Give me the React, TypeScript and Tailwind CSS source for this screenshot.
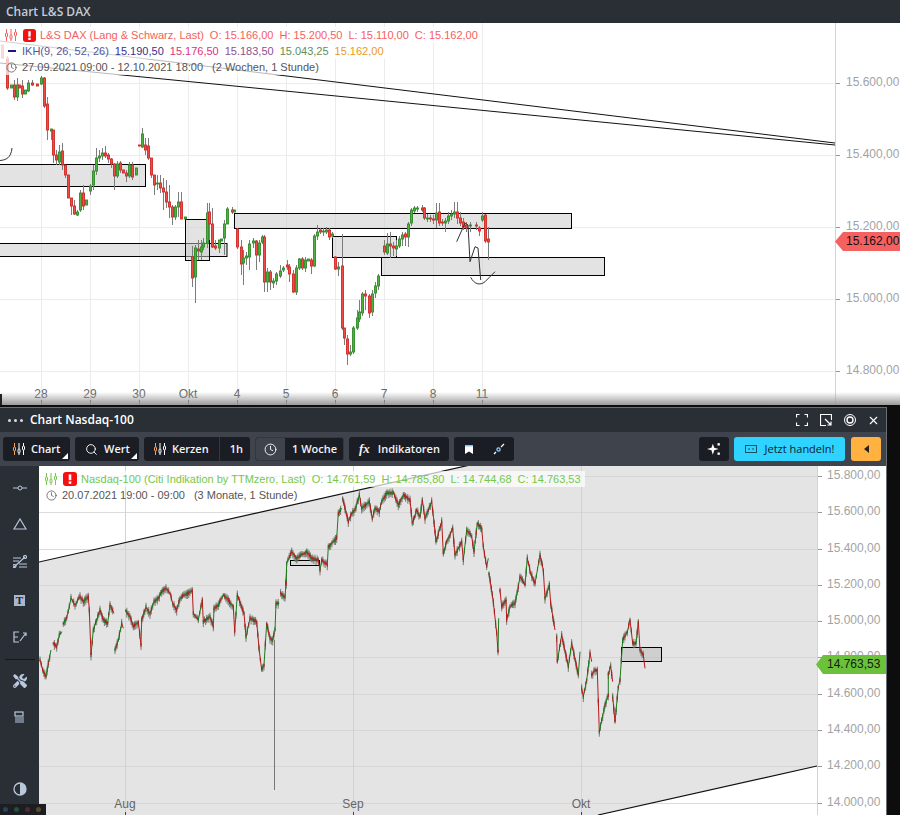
import React from "react";
import { Search, Clock, X } from "lucide-react";
import { FaTools } from "react-icons/fa";

// x, body top, body bottom, up?, wick top, wick bottom (all in page pixels)
type Candle = [number, number, number, number, number?, number?];

const daxCandles: Candle[] = [
  [2, 45, 58, 0], [7, 58, 88, 0, 56, 90], [11, 85, 88, 1], [14, 85, 97, 0, 80, 100], [17, 85, 97, 1, 78, 101], [19, 85, 88, 0],
  [22, 86, 94, 0, 80, 98], [25, 90, 94, 1], [28, 83, 91, 1, 80, 92], [32, 83, 85, 0, 80, 86], [37, 84, 86, 0], [41, 78, 84, 1, 76, 85],
  [44, 78, 106, 0, 77, 108], [47, 104, 130, 0, 97, 140], [51, 129, 131, 1, 129, 140], [53, 130, 155, 0, 130, 163], [56, 155, 160, 0, 150, 165],
  [59, 152, 162, 1, 145, 165], [62, 151, 165, 0, 143, 170], [65, 165, 175, 0, 165, 178], [68, 175, 198, 0], [71, 198, 206, 0, 198, 215],
  [74, 206, 214, 0, 200, 215], [77, 212, 215, 1, 210, 216], [80, 193, 210, 1, 190, 212], [83, 193, 206, 0, 185, 210], [86, 200, 205, 1],
  [90, 186, 191, 1, 184, 195], [93, 171, 185, 1, 165, 190], [96, 158, 171, 1, 148, 175], [99, 156, 158, 1, 150, 162], [102, 153, 156, 1, 148, 160],
  [105, 153, 156, 0, 146, 158], [108, 155, 159, 0, 153, 163], [111, 159, 164, 0, 158, 168], [114, 164, 176, 0, 163, 190], [117, 164, 176, 1, 161, 178],
  [120, 163, 170, 0, 161, 173], [123, 170, 173, 0], [126, 173, 176, 0, 170, 182], [129, 165, 176, 1, 162, 178], [132, 165, 177, 0, 162, 180],
  [136, 168, 175, 1], [139, 145, 146, 0], [142, 134, 147, 1, 128, 148], [145, 145, 150, 0, 138, 155], [148, 146, 158, 0, 138, 160],
  [151, 158, 175, 0, 158, 178], [154, 175, 185, 0, 175, 195], [157, 183, 184, 1, 175, 190], [160, 183, 188, 0, 175, 193], [163, 188, 192, 0, 178, 210],
  [166, 192, 202, 0, 180, 208], [169, 202, 207, 0, 185, 218], [172, 207, 217, 0, 205, 225], [175, 207, 217, 1, 205, 220], [178, 202, 207, 1, 192, 217],
  [181, 202, 219, 0, 192, 219], [185, 217, 219, 1], [192, 257, 278, 0, 246, 287], [195, 248, 277, 1, 245, 303], [198, 249, 251, 0, 240, 260],
  [201, 247, 252, 1, 240, 260], [203, 243, 247, 1, 238, 250], [207, 213, 243, 1, 203, 248], [209, 212, 224, 0, 203, 240], [212, 224, 247, 0, 208, 248],
  [215, 246, 248, 0, 240, 250], [219, 240, 248, 1, 240, 253], [221, 239, 241, 1], [224, 224, 238, 1, 220, 255], [227, 209, 224, 1, 207, 224],
  [232, 210, 212, 0, 207, 214], [234, 210, 212, 1], [237, 229, 247, 0, 228, 249], [241, 247, 264, 0, 240, 275], [243, 258, 263, 1, 250, 285],
  [246, 256, 258, 1, 252, 265], [249, 244, 257, 1, 240, 270], [253, 241, 243, 1, 238, 248], [256, 241, 255, 0, 240, 270], [259, 243, 255, 1, 240, 262],
  [262, 237, 242, 1, 235, 244], [264, 237, 282, 0, 235, 292], [267, 272, 282, 1, 268, 292], [270, 272, 282, 0, 270, 290], [273, 281, 283, 1, 278, 288],
  [276, 274, 281, 1, 272, 285], [280, 271, 276, 1, 265, 278], [283, 268, 270, 1, 266, 272], [287, 265, 267, 0, 260, 270], [289, 267, 274, 0, 264, 282],
  [293, 274, 292, 0, 270, 293], [296, 268, 292, 1, 265, 295], [299, 259, 268, 1, 258, 270], [302, 259, 268, 0, 257, 270], [305, 260, 268, 1, 257, 272],
  [308, 259, 261, 1], [311, 260, 266, 0, 258, 274], [314, 236, 266, 1, 234, 267], [317, 232, 236, 1, 225, 240], [320, 230, 232, 0, 228, 234],
  [323, 231, 232, 1, 228, 236], [326, 230, 232, 1, 227, 234], [329, 230, 237, 0, 228, 240], [332, 234, 236, 1, 232, 238], [335, 257, 269, 0, 256, 270],
  [338, 267, 269, 1, 262, 276], [342, 266, 328, 0, 234, 330], [344, 328, 338, 0, 328, 345], [347, 339, 354, 0, 335, 365], [350, 352, 354, 1, 345, 356],
  [353, 328, 352, 1, 326, 354], [357, 318, 328, 1, 310, 330], [359, 312, 319, 1, 300, 322], [362, 294, 313, 1, 292, 316], [365, 294, 296, 0, 290, 310],
  [369, 296, 313, 0, 294, 318], [372, 294, 312, 1, 290, 316], [375, 286, 293, 1, 282, 298], [378, 276, 286, 1, 274, 290], [384, 246, 252, 0, 240, 255],
  [387, 244, 253, 1, 233, 255], [390, 244, 246, 0, 232, 258], [393, 246, 248, 0, 242, 256], [396, 246, 249, 1, 240, 256], [399, 239, 246, 1, 236, 248],
  [402, 235, 239, 1, 232, 246], [405, 234, 237, 0, 232, 246], [408, 224, 237, 1, 222, 247], [411, 210, 223, 1, 208, 226], [414, 208, 211, 1, 206, 213],
  [417, 208, 209, 1, 206, 212], [422, 208, 210, 0, 205, 212], [424, 208, 218, 0, 207, 220], [427, 218, 219, 1, 214, 222], [430, 218, 219, 0, 215, 222],
  [433, 219, 220, 0, 215, 224], [436, 213, 220, 1, 203, 228], [439, 212, 223, 0, 203, 226], [442, 222, 223, 0, 219, 226], [445, 221, 223, 1, 218, 232],
  [448, 216, 221, 1, 212, 224], [451, 214, 216, 1, 210, 220], [454, 212, 214, 1, 202, 218], [457, 212, 218, 0, 202, 224], [460, 218, 223, 0, 212, 226],
  [463, 222, 227, 0, 218, 230], [466, 225, 228, 0, 222, 232], [470, 225, 226, 1, 222, 232], [476, 225, 226, 0, 222, 230], [479, 228, 231, 0, 226, 236],
  [482, 216, 220, 1, 212, 222], [485, 215, 241, 0, 214, 243], [488, 239, 242, 0, 227, 260],
];

const daxBoxes = [
  [-2, 164.5, 147.5, 22],
  [-2, 243.5, 229, 13],
  [185.5, 219.5, 24, 41],
  [234.5, 213.5, 337, 15],
  [332.5, 236.5, 64, 21],
  [381.5, 257.5, 223, 18],
];

// nasdaq price walk, each run is one unbroken stretch of the line
const crop = (ox: number, oy: number, pts: number[]) => {
  const out: [number, number][] = [];
  for (let i = 0; i < pts.length; i += 2) out.push([ox + pts[i] / 3, oy + pts[i + 1] / 3]);
  return out;
};

const nasdaqRuns = [
  crop(40, 570, [0, 270, 8, 300, 18, 320, 25, 280, 33, 240]),
  crop(40, 570, [40, 220, 50, 230, 58, 195, 66, 185]),
  crop(40, 570, [70, 160, 80, 145, 88, 110, 93, 85, 105, 105, 120, 80, 130, 95, 145, 80, 148, 120, 153, 255, 160, 180, 170, 150, 180, 120, 190, 150, 203, 160, 210, 105, 222, 130]),
  crop(40, 570, [225, 240, 235, 210, 245, 160, 250, 175]),
  crop(40, 570, [257, 122, 270, 140, 280, 170, 295, 155, 303, 225, 305, 150, 318, 112, 330, 130, 342, 95, 355, 85, 365, 65, 378, 55, 390, 70, 398, 100, 410, 120, 420, 85, 435, 75, 457, 62, 460, 130, 475, 150, 487, 90, 490, 155, 510, 140, 520, 170, 522, 115, 535, 105, 550, 75, 565, 90, 580, 110, 584, 185, 592, 75, 612, 130, 618, 200, 630, 145, 650, 155, 657, 235, 665, 300, 672, 285, 680, 160, 690, 205, 698, 210, 705, 180, 708, 100, 718, 100]),
  crop(40, 570, [722, 70, 735, 82, 738, 40, 740, 0]),
  crop(270, 470, [48, 340, 50, 280, 65, 245, 80, 265, 110, 245, 125, 265, 145, 270, 150, 300, 155, 270, 172, 285, 175, 230, 200, 205, 205, 130, 215, 115]),
  crop(270, 470, [218, 85, 235, 155, 245, 130, 255, 120, 268, 75, 275, 115, 298, 95, 307, 145, 315, 115, 328, 125, 335, 95, 350, 70, 370, 68, 385, 105, 400, 75, 420, 90, 427, 160, 440, 120, 450, 140, 457, 90, 465, 145, 485, 95, 492, 155, 498, 215, 515, 155, 520, 250, 530, 215, 548, 175, 555, 255, 565, 235, 575, 215, 580, 270, 590, 180, 605, 200, 612, 245, 622, 160, 635, 175, 640, 230, 650, 290, 655, 265]),
  crop(270, 470, [657, 310, 670, 395, 680, 490, 684, 545, 686, 445]),
  crop(270, 470, [690, 360, 695, 410, 708, 390, 710, 450, 720, 410, 735, 400, 745, 350, 750, 320, 765, 345, 772, 265, 782, 310, 795, 340, 810, 255, 820, 300, 825, 385, 838, 345, 842, 400, 855, 480]),
  crop(540, 600, [50, 110, 52, 185, 65, 105, 85, 200, 95, 130, 115, 225, 120, 155]),
  crop(540, 600, [125, 265, 130, 290, 140, 240, 150, 160, 155, 185]),
  crop(540, 600, [155, 225, 165, 210, 172, 210, 178, 395, 195, 315, 205, 285, 205, 220, 212, 200, 218, 245]),
  crop(540, 600, [218, 290, 225, 365, 235, 260, 240, 240, 248, 120, 262, 95, 270, 60, 278, 130, 288, 130, 295, 65, 300, 150, 310, 165, 315, 205]),
];

let wickPath = "";
let upPath = "";
let downPath = "";
nasdaqRuns.forEach((run) => {
  run.forEach(([x, y], i) => {
    if (i === 0) return;
    const [px, py] = run[i - 1];
    const seg = `M${px.toFixed(1)} ${py.toFixed(1)}L${x.toFixed(1)} ${y.toFixed(1)}`;
    if (y < py) upPath += seg;
    else downPath += seg;
    const steps = Math.max(1, Math.round((x - px) / 1.2));
    for (let s = 0; s < steps; s++) {
      const wx = px + ((x - px) * s) / steps;
      const wy = py + ((y - py) * s) / steps;
      const a = 1.5 + Math.abs(Math.sin(wx * 12.9)) * 3;
      const b = 1.5 + Math.abs(Math.sin(wx * 7.3)) * 4;
      wickPath += `M${wx.toFixed(1)} ${(wy - a).toFixed(1)}V${(wy + b).toFixed(1)}`;
      // tiny bodies on top of the wicks
      const body = `M${wx.toFixed(1)} ${(wy - a * 0.5).toFixed(1)}V${(wy + b * 0.4).toFixed(1)}`;
      if (Math.sin(wx * 3.7) > 0.1) downPath += body;
      else upPath += body;
    }
  });
});

const daxDays = [
  ["28", 41], ["29", 90], ["30", 139], ["Okt", 188], ["4", 237], ["5", 286], ["6", 335], ["7", 384], ["8", 433], ["11", 482],
] as const;
const daxPrices = [["15.600,00", 83], ["15.400,00", 155], ["15.200,00", 227], ["15.000,00", 299], ["14.800,00", 371]] as const;
const ndqPrices = [
  ["15.800,00", 476], ["15.600,00", 512], ["15.400,00", 549], ["15.200,00", 585], ["15.000,00", 621],
  ["14.800,00", 657], ["14.600,00", 694], ["14.400,00", 730], ["14.200,00", 766], ["14.000,00", 803],
] as const;

const CandleIcon = ({ color = "#fff", accent = "#f5a25d", className = "" }: { color?: string; accent?: string; className?: string }) => (
  <svg viewBox="0 0 12 12" className={className} fill="none" strokeWidth="1">
    <path d="M1.5 0V4M1.5 8V12" stroke={accent} />
    <rect x="0.5" y="4" width="2" height="4" rx="1" stroke={accent} />
    <path d="M6 0V6M6 10V12" stroke={color} />
    <rect x="5" y="6" width="2" height="4" rx="1" stroke={color} />
    <path d="M10.5 0V3M10.5 7V12" stroke={color} />
    <rect x="9.5" y="3" width="2" height="4" rx="1" stroke={color} />
  </svg>
);

const Alert = ({ className = "" }: { className?: string }) => (
  <svg viewBox="0 0 14 14" className={className}>
    <rect width="14" height="14" rx="3" fill="#f50f0f" />
    <rect x="5.7" y="2.4" width="2.6" height="5.8" fill="#fff" />
    <rect x="5.7" y="9.4" width="2.6" height="2.4" fill="#fff" />
  </svg>
);

const Corner = () => (
  <span className="absolute right-[2px] bottom-[2px] border-l-[6px] border-b-[6px] border-l-transparent border-b-white" />
);

const ToolButton = ({ children, className = "" }: { children: React.ReactNode; className?: string }) => (
  <div className={`relative flex h-6 items-center rounded-[3px] bg-[#1a1d23] text-[11px] font-semibold whitespace-nowrap text-[#f2f4f7] ${className}`}>{children}</div>
);

const PriceLabel = ({ text, y, x, top }: { text: string; y: number; x: number; top: number }) => (
  <span
    className="absolute text-[12px] leading-[14px] text-[#a3a3a3] whitespace-nowrap"
    style={{ left: x, top: y - top - 8 }}
  >
    {text}
  </span>
);

const DaxChart = () => (
  <div className="relative h-[382px] overflow-hidden bg-white font-['Liberation_Sans',sans-serif]">
    <svg viewBox="0 23 900 382" className="absolute inset-0 h-[382px] w-[900px]" fill="none">
      {daxPrices.map(([, y]) => (
        <path key={y} d={`M0 ${y + 0.5}H835`} stroke="#ececec" />
      ))}
      {daxDays.map(([, x]) => (
        <path key={x} d={`M${x + 0.5} 23V400`} stroke="#ececec" />
      ))}
      <path d="M835.5 23V407" stroke="#d3d3d3" />
      {daxPrices.map(([, y]) => (
        <path key={y} d={`M836 ${y + 0.5}H840`} stroke="#999" />
      ))}
      {daxDays.map(([, x]) => (
        <path key={x} d={`M${x + 0.5} 400V405`} stroke="#444" />
      ))}
      <path d="M0 41L835 143M0 63L835 145" stroke="#111" strokeWidth="1" />
      {daxBoxes.map(([x, y, w, h]) => (
        <rect key={x + y} x={x} y={y} width={w} height={h} fill="#c8c8c8" fillOpacity="0.5" stroke="#000" />
      ))}
      {daxCandles.map(([x, top, bot, up, wt, wb]) => (
        <g key={x}>
          <path d={`M${x + 0.5} ${wt ?? top}V${wb ?? bot}`} stroke="#7c7c7c" />
          <rect x={x - 0.5} y={top} width="2" height={bot - top} fill={up ? "#4fb040" : "#ee4a46"} stroke={up ? "#2f8c27" : "#cf2a27"} strokeWidth="0.9" />
        </g>
      ))}
      <path d="M0 160.5C6 160 11 158 12 148" stroke="#333" />
      <path d="M456.7 241.7L465 223L468 225L470 261.7L475 246.7L478 248L480.7 280" stroke="#333" />
      <path d="M470.7 277.3C474 284 480 286 485 281.7L495 271.7" stroke="#333" />
      <path d="M835 241.5L843 232V251Z" fill="#f56060" />
    </svg>

    <div className="absolute left-0 top-[4px] flex flex-col text-[11px] leading-4 whitespace-nowrap">
      <div className="flex w-fit items-center gap-[6px] bg-white/80 pl-[5px] pr-1 text-[#f55e5e]">
        <CandleIcon color="#f55e5e" accent="#f55e5e" className="h-[12px] w-[12px]" />
        <span className="flex items-center gap-[4px]">
          <Alert className="h-[13px] w-[13px]" />
          L&amp;S DAX (Lang &amp; Schwarz, Last)
        </span>
        <span>O: 15.166,00</span>
        <span>H: 15.200,50</span>
        <span>L: 15.110,00</span>
        <span>C: 15.162,00</span>
      </div>
      <div className="flex w-fit items-center gap-[6px] bg-white/80 pl-[8px] pr-1">
        <span className="h-[2px] w-[8px] bg-[#1c1580]" />
        <span className="text-[#55559c]">IKH(9, 26, 52, 26)</span>
        <span className="text-[#37308f]">15.190,50</span>
        <span className="text-[#e0307a]">15.176,50</span>
        <span className="text-[#8f4f8f]">15.183,50</span>
        <span className="text-[#5f8f5a]">15.043,25</span>
        <span className="text-[#e89b22]">15.162,00</span>
      </div>
      <div className="flex w-fit items-center gap-[5px] bg-white/70 pl-[6px] pr-1 text-[#555]">
        <Clock className="h-[11px] w-[11px] text-[#444]" strokeWidth={1.5} />
        <span>27.09.2021 09:00 - 12.10.2021 18:00</span>
        <span className="ml-[4px]">(2 Wochen, 1 Stunde)</span>
      </div>
    </div>

    {daxPrices.map(([t, y]) => (
      <PriceLabel key={t} text={t} y={y} x={846} top={23} />
    ))}
    <span className="absolute left-[843px] top-[209px] h-[19px] w-[57px] bg-[#f56060] pl-[3px] text-[12px] leading-[19px] text-[#1c0f0f]">15.162,00</span>
    {daxDays.map(([t, x]) => (
      <span key={t} className="absolute w-8 text-center text-[12px] leading-[14px] text-[#666]" style={{ left: x - 16, top: 364 }}>
        {t}
      </span>
    ))}
    <div className="absolute inset-x-0 bottom-0 h-[13px] bg-gradient-to-b from-transparent to-[#9a9a9a]" />
    <div className="absolute bottom-0 left-0 h-[11px] w-[2px] bg-[#222]" />
  </div>
);

const NasdaqChart = () => (
  <div className="relative flex-1 overflow-hidden bg-white font-['Liberation_Sans',sans-serif]">
    <svg viewBox="39 466 848 349" className="absolute inset-0 h-[349px] w-[848px]" fill="none">
      <path d="M39 562L470 465H817V766L598 815H39Z" fill="#e4e4e4" />
      {ndqPrices.map(([, y]) => (
        <path key={y} d={`M39 ${y + 0.5}H817`} stroke="#d2d2d2" strokeOpacity="0.8" />
      ))}
      {[125, 353, 581].map((x) => (
        <path key={x} d={`M${x + 0.5} 466V812`} stroke="#d2d2d2" />
      ))}
      <path d="M817.5 466V815" stroke="#d3d3d3" />
      {ndqPrices.map(([, y]) => (
        <path key={y} d={`M818 ${y + 0.5}H822`} stroke="#999" />
      ))}
      {[125, 353, 581].map((x) => (
        <path key={x} d={`M${x + 0.5} 812V815`} stroke="#444" />
      ))}
      <path d="M39 562L470 465M598 815L817 766" stroke="#111" strokeWidth="1.2" />
      <rect x="290.5" y="560.5" width="29" height="5" fill="#c8c8c8" fillOpacity="0.4" stroke="#000" />
      <rect x="621.5" y="647.5" width="40" height="14" fill="#bdbdbd" fillOpacity="0.55" stroke="#000" />
      <path d="M274.5 640V790" stroke="#777" />
      <path d={wickPath} stroke="#7a7a7a" strokeWidth="1" />
      <path d={upPath} stroke="#1d7a1d" strokeWidth="1" />
      <path d={downPath} stroke="#b51a1a" strokeWidth="1" />
      <path d="M816 664.5L823 655V674Z" fill="#6cc13c" />
    </svg>

    <div className="absolute left-0 top-[5px] flex flex-col text-[11px] leading-4 whitespace-nowrap">
      <div className="flex w-fit items-center gap-[6px] bg-white/70 pl-[6px] pr-1 text-[#74c94a]">
        <CandleIcon color="#74c94a" accent="#74c94a" className="h-[12px] w-[12px]" />
        <span className="flex items-center gap-[4px]">
          <Alert className="h-[14px] w-[14px]" />
          Nasdaq-100 (Citi Indikation by TTMzero, Last)
        </span>
        <span>O: 14.761,59</span>
        <span>H: 14.785,80</span>
        <span>L: 14.744,68</span>
        <span>C: 14.763,53</span>
      </div>
      <div className="flex w-fit items-center gap-[5px] pl-[7px] text-[#555]">
        <Clock className="h-[11px] w-[11px] text-[#444]" strokeWidth={1.5} />
        <span>20.07.2021 19:00 - 09:00</span>
        <span className="ml-[4px]">(3 Monate, 1 Stunde)</span>
      </div>
    </div>

    {ndqPrices.map(([t, y]) => (
      <PriceLabel key={t} text={t} y={y} x={788} top={466} />
    ))}
    <span className="absolute left-[784px] top-[189px] h-[19px] w-[63px] bg-[#6cc13c] pl-[4px] text-[12px] leading-[19px] text-[#10220a]">14.763,53</span>
    {[["Aug", 125], ["Sep", 353], ["Okt", 581]].map(([t, x]) => (
      <span key={t} className="absolute w-10 text-center text-[12px] leading-[14px] text-[#666]" style={{ left: (x as number) - 39 - 20, top: 331 }}>
        {t}
      </span>
    ))}
  </div>
);

const Sidebar = () => (
  <div className="relative flex w-[39px] shrink-0 flex-col items-center bg-[#2a2e35] pt-[19px] text-[#b9c8dd]">
    <svg viewBox="0 0 14 6" className="h-[6px] w-[14px]" fill="none" stroke="currentColor">
      <path d="M0 3H5M9 3H14" />
      <circle cx="7" cy="3" r="2" />
    </svg>
    <svg viewBox="0 0 14 12" className="mt-[27px] h-[12px] w-[14px]" fill="none" stroke="currentColor" strokeWidth="1.2">
      <path d="M7 1L13 11H1Z" />
    </svg>
    <svg viewBox="0 0 14 13" className="mt-[25px] h-[13px] w-[14px]" fill="none" stroke="currentColor" strokeWidth="1.2">
      <path d="M0 3H8M0 6H6M6 9H14M6 12H14" />
      <path d="M1 12L12 2" />
      <circle cx="12" cy="2" r="1.5" />
      <circle cx="1.5" cy="11" r="1.5" />
    </svg>
    <span className="mt-[27px] flex h-[11px] w-[11px] items-center justify-center bg-[#a9b8cf] font-['Liberation_Serif',serif] text-[11px] font-bold leading-none text-[#1f2329]">
      T
    </span>
    <svg viewBox="0 0 14 12" className="mt-[25px] h-[12px] w-[14px]" fill="none" stroke="currentColor" strokeWidth="1.2">
      <path d="M6 1H1V11H6M1 6H5" />
      <path d="M7 10L13 2M10 2H13V5" />
    </svg>
    <div className="mt-[16px] h-px w-[30px] bg-[#14161a]" />
    <FaTools className="mt-[14px] h-[14px] w-[14px]" />
    <svg viewBox="0 0 11 12" className="mt-[23px] h-[12px] w-[11px]" fill="none" stroke="currentColor" strokeWidth="1.2">
      <rect x="1" y="1" width="8" height="4" />
      <path d="M1 7H10M1 9H10M1 11H10" />
    </svg>
    <svg viewBox="0 0 14 14" className="mt-[59px] h-[14px] w-[14px]">
      <circle cx="7" cy="7" r="6" fill="none" stroke="currentColor" strokeWidth="1.3" />
      <path d="M7 1A6 6 0 0 1 7 13Z" fill="currentColor" />
    </svg>
    <div className="absolute bottom-0 left-0 z-10 flex h-[11px] w-[46px] items-center gap-[6px] bg-[#1c1e22] pl-[3px]">
      <span className="h-[5px] w-[5px] rounded-full bg-[#27425f]" />
      <span className="h-[5px] w-[5px] rounded-full bg-[#22503a]" />
      <span className="h-[5px] w-[5px] rounded-full bg-[#552637]" />
      <span className="h-[5px] w-[5px] rounded-full bg-[#5a4a2c]" />
    </div>
  </div>
);

const Toolbar = () => (
  <div className="flex h-[34px] items-center gap-[5px] bg-[#3f434c] px-[3px] font-['Open_Sans',sans-serif]">
    <ToolButton className="w-[67px] pl-[10px]">
      <CandleIcon className="mr-[6px] h-[12px] w-[12px]" />
      Chart
      <Corner />
    </ToolButton>
    <ToolButton className="w-[64px] pl-[10px]">
      <Search className="mr-[6px] h-[13px] w-[13px]" strokeWidth={1.8} />
      Wert
      <Corner />
    </ToolButton>
    <ToolButton className="w-[106px] pl-[10px]">
      <CandleIcon className="mr-[6px] h-[12px] w-[12px]" />
      Kerzen
      <span className="ml-[10px] flex h-6 items-center border-l border-[#33373f] pl-[10px]">1h</span>
    </ToolButton>
    <ToolButton className="w-[89px] overflow-hidden border border-[#33373f]">
      <span className="flex h-full w-[29px] items-center justify-center bg-[#3f434c]">
        <Clock className="h-[13px] w-[13px]" strokeWidth={1.8} />
      </span>
      <span className="ml-[7px]">1 Woche</span>
    </ToolButton>
    <ToolButton className="w-[100px] pl-[10px]">
      <span className="mr-[8px] font-['Liberation_Serif',serif] text-[13px] font-bold italic">fx</span>
      Indikatoren
    </ToolButton>
    <div className="flex">
      <ToolButton className="w-[30px] justify-center rounded-r-none">
        <svg viewBox="0 0 8 9" className="h-[9px] w-[8px]">
          <path d="M0 0H8V9L4 6.5L0 9Z" fill="#fff" />
          <path d="M0 0H8V1.5H0Z" fill="#7cc7f5" />
        </svg>
      </ToolButton>
      <ToolButton className="w-[30px] justify-center rounded-l-none">
        <svg viewBox="0 0 12 12" className="h-[12px] w-[12px]" fill="none" stroke="#fff" strokeWidth="1.3">
          <path d="M1 11L3 9M8 4L11 1" />
          <circle cx="5.5" cy="6.5" r="1.6" stroke="#8fd0ff" />
        </svg>
      </ToolButton>
    </div>
    <div className="flex-1" />
    <ToolButton className="w-[30px] justify-center">
      <svg viewBox="0 0 12 12" className="h-[14px] w-[14px]" fill="#fff">
        <path d="M5 1.5L6.2 5L10 6L6.2 7L5 11L3.8 7L0 6L3.8 5Z" />
        <rect x="9" y="1" width="2" height="2" />
        <rect x="9" y="9" width="2" height="2" />
      </svg>
    </ToolButton>
    <div className="flex h-6 w-[111px] items-center justify-center gap-[8px] rounded-[3px] bg-[#2fd3ff] text-[11px] whitespace-nowrap text-[#10202a]">
      <svg viewBox="0 0 12 8" className="h-[8px] w-[12px]" fill="none" stroke="#1d4f63">
        <rect x="0.5" y="0.5" width="11" height="7" />
        <path d="M3 4H5M7 4H9" />
      </svg>
      Jetzt handeln!
    </div>
    <div className="ml-px mr-[2px] flex h-6 w-[30px] items-center justify-center rounded-[3px] bg-[#ffb23f]">
      <span className="border-y-[4px] border-r-[5px] border-y-transparent border-r-[#222]" />
    </div>
  </div>
);

const TitleBar = () => (
  <div className="flex h-[24px] items-center bg-[#2a2e35] pl-[8px] pr-[6px] font-['Open_Sans',sans-serif] text-[12px] font-semibold text-white">
    <span className="flex gap-[3px]">
      <span className="h-[3px] w-[3px] rounded-full bg-[#d8dbe0]" />
      <span className="h-[3px] w-[3px] rounded-full bg-[#d8dbe0]" />
      <span className="h-[3px] w-[3px] rounded-full bg-[#d8dbe0]" />
    </span>
    <span className="ml-[7px]">Chart Nasdaq-100</span>
    <div className="ml-auto flex items-center gap-[12px]">
      <svg viewBox="0 0 12 12" className="h-[12px] w-[12px]" fill="none" stroke="#fff" strokeWidth="1.2">
        <path d="M0.5 3.5V0.5H3.5M8.5 0.5H11.5V3.5M11.5 8.5V11.5H8.5M3.5 11.5H0.5V8.5" />
      </svg>
      <svg viewBox="0 0 12 12" className="h-[12px] w-[12px]" fill="none" stroke="#fff" strokeWidth="1.2">
        <path d="M11.5 6V0.5H0.5V11.5H6" />
        <path d="M5 5L11 11M11 7.5V11H7.5" />
      </svg>
      <svg viewBox="0 0 12 12" className="h-[12px] w-[12px]" fill="none" stroke="#fff">
        <circle cx="6" cy="6" r="5.5" />
        <circle cx="6" cy="6" r="3" strokeWidth="1.4" />
      </svg>
      <X className="-ml-px h-[13px] w-[13px]" color="#fff" strokeWidth={2} />
    </div>
  </div>
);

export default function App() {
  return (
    <div className="flex h-[815px] w-[900px] flex-col overflow-hidden bg-white">
      <div className="flex h-[23px] shrink-0 items-center bg-[#2a2e35] pl-[6px] font-['Open_Sans',sans-serif] text-[12px] font-semibold text-[#c3ccd6]">
        Chart L&amp;S DAX
      </div>
      <DaxChart />
      <div className="flex h-[410px] bg-[#0d0d0d] pt-[2px]">
        <div className="flex h-[408px] w-[887px] flex-col overflow-hidden border-t border-r border-[#6a6e76]">
          <TitleBar />
          <Toolbar />
          <div className="flex min-h-0 flex-1">
            <Sidebar />
            <NasdaqChart />
          </div>
        </div>
      </div>
    </div>
  );
}
